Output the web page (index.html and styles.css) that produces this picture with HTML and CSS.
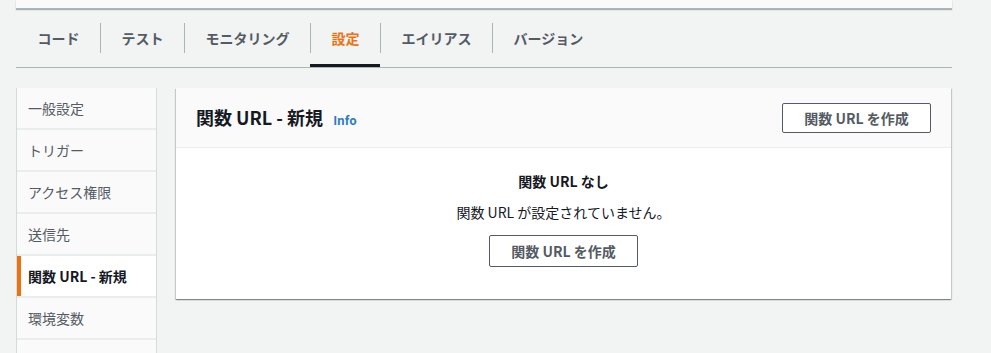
FILE: index.html
```html
<!DOCTYPE html>
<html lang="ja">
<head>
    <meta charset="UTF-8" />
    <meta name="viewport" content="width=device-width, initial-scale=1.0" />
    <title>関数 URL - 新規</title>
    <link rel="stylesheet" href="styles.css">
</head>
<body>
    <div class="top-card"></div>

    <div class="tabs">
        <div class="tab"><span class="tab-label">コード</span></div>
        <div class="tab"><span class="tab-label">テスト</span></div>
        <div class="tab"><span class="tab-label">モニタリング</span></div>
        <div class="tab active"><span class="tab-label">設定</span></div>
        <div class="tab"><span class="tab-label">エイリアス</span></div>
        <div class="tab"><span class="tab-label">バージョン</span></div>
    </div>

    <div class="layout">
        <ul class="side-nav">
            <li>一般設定</li>
            <li>トリガー</li>
            <li>アクセス権限</li>
            <li>送信先</li>
            <li class="active">関数 URL - 新規</li>
            <li>環境変数</li>
            <li></li>
        </ul>

        <div class="panel">
            <div class="panel-header">
                <h2>関数 URL - 新規 <a class="info" href="#">Info</a></h2>
                <button class="btn">関数 URL を作成</button>
            </div>
            <div class="panel-body">
                <p class="empty-title">関数 URL なし</p>
                <p class="empty-text">関数 URL が設定されていません。</p>
                <button class="btn">関数 URL を作成</button>
            </div>
        </div>
    </div>
</body>
</html>
```

FILE: styles.css
```css
body {
    font-family: "Noto Sans CJK JP", "Noto Sans", sans-serif;
    background-color: #f2f3f3;
    color: #16191f;
    margin: 0;
    font-size: 14px;
    line-height: 22px;
    overflow: hidden;
}
.top-card {
    height: 8px;
    margin: 0 39px 0 16px;
    background: #fafafa;
    border-bottom: 1px solid #aab7b8;
    box-shadow: 0 1px 1px rgba(0, 28, 36, 0.3);
}
.tabs {
    display: flex;
    margin: 0 39px 0 16px;
    border-bottom: 1px solid #aab7b8;
}
.tab {
    box-sizing: border-box;
    height: 58px;
    padding-top: 3px;
    border-bottom: 3px solid transparent;
    display: flex;
    align-items: center;
    font-weight: bold;
    color: #545b64;
}
.tab-label {
    padding: 0 20.5px;
    line-height: 30px;
    border-left: 1px solid #aab7b8;
}
.tab:first-child .tab-label {
    border-left: none;
    padding-left: 21.5px;
}
.tab.active {
    border-bottom-color: #16191f;
    color: #ec7211;
}
.layout {
    display: flex;
    align-items: flex-start;
    gap: 19px;
    margin: 20px 40px 0 16px;
}
.side-nav {
    list-style: none;
    margin: 0;
    padding: 0;
    width: 139px;
    flex-shrink: 0;
    border-left: 1px solid #d5dbdb;
    border-right: 1px solid #d5dbdb;
    background: #eaeded;
}
.side-nav li {
    height: 40px;
    line-height: 40px;
    margin-bottom: 2px;
    padding-left: 7px;
    background: #fafafa;
    color: #545b64;
    border-left: 4px solid transparent;
    white-space: nowrap;
}
.side-nav li.active {
    background: #fff;
    border-left-color: #ec7211;
    color: #16191f;
    font-weight: bold;
}
.panel {
    flex: 1;
    background: #fff;
    box-shadow: 0 1px 1px 0 rgba(0, 28, 36, 0.3), 1px 1px 1px 0 rgba(0, 28, 36, 0.15), -1px 1px 1px 0 rgba(0, 28, 36, 0.15);
}
.panel-header {
    display: flex;
    align-items: center;
    justify-content: space-between;
    height: 59px;
    padding: 0 20px;
    background: #fafafa;
    border-bottom: 1px solid #eaeded;
}
.panel-header h2 {
    margin: 0;
    font-size: 18px;
    font-weight: bold;
    line-height: 26px;
    padding-top: 2px;
}
.info {
    margin-left: 6px;
    font-size: 12px;
    color: #2a7bc4;
    text-decoration: none;
}
.btn {
    font-family: inherit;
    font-size: 14px;
    font-weight: bold;
    color: #545b64;
    background: #fff;
    border: 1px solid #545b64;
    border-radius: 2px;
    padding: 0 20px;
    height: 30px;
    width: 149px;
    line-height: 28px;
}
.panel-body {
    display: flex;
    flex-direction: column;
    align-items: center;
    padding: 22px 20px 32px;
}
.panel-body p {
    margin: 0;
}
.empty-title {
    font-weight: bold;
}
.empty-text {
    margin-top: 9px !important;
    color: #16191f;
}
.panel-body .btn {
    margin-top: 12px;
    height: 32px;
}
```
